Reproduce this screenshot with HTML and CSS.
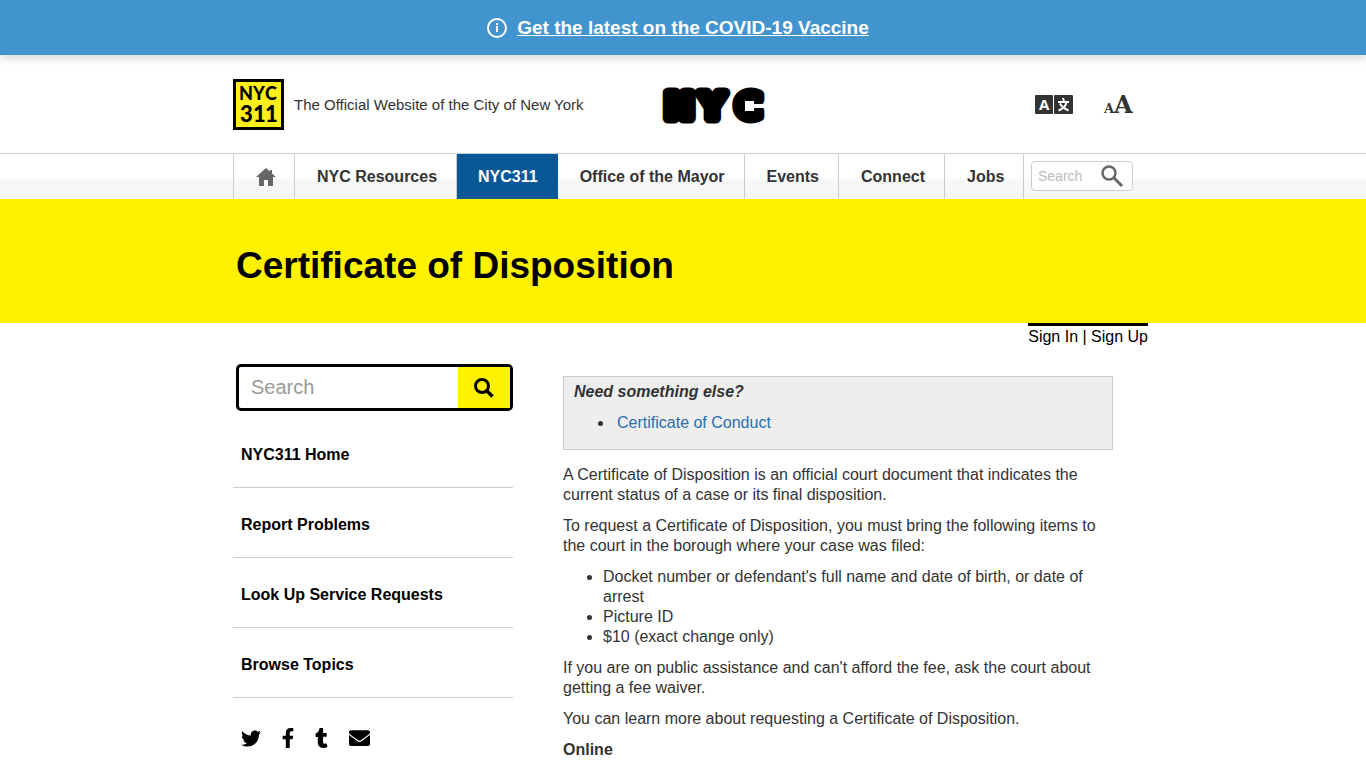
FILE: index.html
```html
<!DOCTYPE html>
<html lang="en">
<head>
<meta charset="utf-8">
<meta name="viewport" content="width=device-width, initial-scale=1">
<title>Certificate of Disposition · NYC311</title>
<link rel="stylesheet" href="styles.css">
</head>
<body>
<div class="alert">
  <svg class="alert-icon" viewBox="0 0 20 20" width="20" height="20" aria-hidden="true"><circle cx="10" cy="10" r="9" fill="none" stroke="#fff" stroke-width="2"/><path d="M9 5h2v2H9zM9 8h2v6H9z" fill="#fff"/></svg>
  <a href="#">Get the latest on the COVID-19 Vaccine</a>
</div>
<header class="header">
  <div class="container header-row">
    <div class="brand">
      <a href="#" class="logo-311" aria-label="NYC311">
        <svg viewBox="0 0 51 51" width="51" height="51"><rect x="1.5" y="1.5" width="48" height="48" fill="#ffee1a" stroke="#000" stroke-width="3"/><text class="logo-text" x="6 20 32" y="21" font-size="18">NYC</text><text class="logo-text" x="7 20 32" y="43" font-size="22">311</text></svg>
      </a>
      <span class="tagline">The Official Website of the City of New York</span>
    </div>
    <a href="#" class="logo-nyc" aria-label="NYC">
      <svg viewBox="0 0 108 38" width="108" height="38"><text class="block-text" x="4 39 75" y="32" font-size="34">NYC</text><path d="M84 15h9v3h15v4H93v3h-9z" fill="#fff"/></svg>
    </a>
    <div class="tools">
      <button type="button" aria-label="Translate">
        <svg viewBox="0 0 38 20" width="38" height="20"><rect width="18" height="19" rx="1" fill="#333"/><rect x="19" width="19" height="19" rx="1" fill="#333"/><text class="tool-a" x="4" y="15">A</text><path d="M28 3l1 3M23 7h11M25 8.500c1.500 3.500 4 5 8.500 7M31.500 7.500c-1 4-3.500 6.500-8 8" fill="none" stroke="#fff" stroke-width="2"/></svg>
      </button>
      <button type="button" aria-label="Text size">
        <svg viewBox="0 0 29 20" width="29" height="20"><text class="size-a" x="0" y="18" font-size="13">A</text><text class="size-a" x="10" y="18" font-size="24">A</text></svg>
      </button>
    </div>
  </div>
</header>
<nav class="nav">
  <div class="container nav-row">
    <a href="#" class="home" aria-label="Home"><svg viewBox="0 0 20 18" width="20" height="18"><path d="M10 0l4 3.600V2h2v3.400L20 9h-3v9h-5v-6H8v6H3V9H0z" fill="#666"/></svg></a>
    <a href="#">NYC Resources</a>
    <a href="#" class="active">NYC311</a>
    <a href="#">Office of the Mayor</a>
    <a href="#">Events</a>
    <a href="#">Connect</a>
    <a href="#">Jobs</a>
    <form class="nav-search">
      <input type="text" placeholder="Search" aria-label="Search NYC">
      <button type="button" aria-label="Search NYC"><svg viewBox="0 0 22 22" width="22" height="22" fill="none" stroke="#666"><circle cx="8" cy="8" r="6.500" stroke-width="2.500"/><path d="M13 13l8 8" stroke-width="3"/></svg></button>
    </form>
  </div>
</nav>
<div class="title-band"><div class="container"><h1>Certificate of Disposition</h1></div></div>
<div class="container">
  <div class="account"><div class="account-links"><a href="#">Sign In</a> | <a href="#">Sign Up</a></div></div>
  <div class="columns">
    <aside class="sidebar">
      <form class="side-search">
        <input type="text" placeholder="Search" aria-label="Search NYC311">
        <button type="button" aria-label="Search NYC311"><svg viewBox="0 0 20 20" width="20" height="20" fill="none" stroke="#000"><circle cx="8" cy="8" r="6.500" stroke-width="3"/><path d="M12.500 12.500l6 6" stroke-width="3.500"/></svg></button>
      </form>
      <ul class="side-menu">
        <li><a href="#">NYC311 Home</a></li>
        <li><a href="#">Report Problems</a></li>
        <li><a href="#">Look Up Service Requests</a></li>
        <li><a href="#">Browse Topics</a></li>
      </ul>
      <div class="social">
        <a href="#" aria-label="Twitter"><svg viewBox="0 48 512 416" width="20" height="17"><path d="M459.370 151.716c.325 4.548.325 9.097.325 13.645 0 138.720-105.583 298.558-298.558 298.558-59.452 0-114.680-17.219-161.137-47.106 8.447.974 16.568 1.299 25.340 1.299 49.055 0 94.213-16.568 130.274-44.832-46.132-.975-84.792-31.188-98.112-72.772 6.498.974 12.995 1.624 19.818 1.624 9.421 0 18.843-1.300 27.614-3.573-48.081-9.747-84.143-51.980-84.143-102.985v-1.299c13.969 7.797 30.214 12.670 47.431 13.319-28.264-18.843-46.781-51.005-46.781-87.391 0-19.492 5.197-37.360 14.294-52.954 51.655 63.675 129.300 105.258 216.365 109.807-1.624-7.797-2.599-15.918-2.599-24.040 0-57.828 46.782-104.934 104.934-104.934 30.213 0 57.502 12.670 76.670 33.137 23.715-4.548 46.456-13.320 66.599-25.340-7.798 24.366-24.366 44.833-46.132 57.827 21.117-2.273 41.584-8.122 60.426-16.243-14.292 20.791-32.161 39.308-52.628 54.253z"/></svg></a>
        <a href="#" aria-label="Facebook"><svg viewBox="22 0 276 512" width="12" height="20"><path d="M279.140 288l14.220-92.660h-88.910v-60.130c0-25.350 12.420-50.060 52.240-50.060h40.420V6.260S260.430 0 225.360 0c-73.220 0-121.080 44.380-121.080 124.720v70.620H22.890V288h81.390v224h100.170V288z"/></svg></a>
        <a href="#" aria-label="Tumblr"><svg viewBox="0 0 320 512" width="13" height="20"><path d="M309.800 480.300c-13.600 14.500-50 31.700-97.400 31.700-120.800 0-147-88.800-147-140.600v-144H17.900c-5.500 0-10-4.500-10-10v-68c0-7.200 4.500-13.600 11.300-16 62-21.800 81.500-76 84.300-117.100.8-11 6.500-16.300 16.100-16.300h70.900c5.500 0 10 4.500 10 10v115.200h83c5.500 0 10 4.400 10 9.900v81.700c0 5.500-4.500 10-10 10h-83.400V360c0 34.200 23.700 53.600 68 35.800 4.800-1.900 9-3.200 12.700-2.200 3.500.9 5.800 3.400 7.400 7.900l22 64.300c1.800 5 3.300 10.600-.4 14.500z"/></svg></a>
        <a href="#" aria-label="Email"><svg viewBox="0 64 512 384" width="21" height="16"><path d="M502.300 190.800c3.900-3.100 9.700-.2 9.700 4.700V400c0 26.500-21.500 48-48 48H48c-26.500 0-48-21.500-48-48V195.600c0-5 5.700-7.800 9.700-4.700 22.400 17.400 52.100 39.500 154.100 113.600 21.100 15.400 56.700 47.800 92.200 47.600 35.700.3 72-32.800 92.300-47.600 102-74.100 131.600-96.300 154-113.700zM256 320c23.200.4 56.600-29.200 73.400-41.400 132.700-96.300 142.800-104.700 173.400-128.700 5.800-4.500 9.200-11.500 9.200-18.900v-19c0-26.500-21.500-48-48-48H48c-26.500 0-48 21.500-48 48v19c0 7.400 3.400 14.300 9.200 18.900 30.600 23.900 40.700 32.400 173.400 128.700 16.800 12.200 50.200 41.800 73.400 41.400z"/></svg></a>
      </div>
    </aside>
    <main class="content">
      <section class="notice">
        <p><strong><em>Need something else?</em></strong></p>
        <ul><li><a href="#">Certificate of Conduct</a></li></ul>
      </section>
      <p>A Certificate of Disposition is an official court document that indicates the current status of a case or its final disposition.</p>
      <p>To request a Certificate of Disposition, you must bring the following items to the court in the borough where your case was filed:</p>
      <ul>
        <li>Docket number or defendant's full name and date of birth, or date of arrest</li>
        <li>Picture ID</li>
        <li>$10 (exact change only)</li>
      </ul>
      <p>If you are on public assistance and can't afford the fee, ask the court about getting a fee waiver.</p>
      <p>You can learn more about requesting a Certificate of Disposition.</p>
      <p><strong>Online</strong></p>
    </main>
  </div>
</div>
</body>
</html>
```
FILE: styles.css
```css
* { box-sizing: border-box; }
body {
  margin: 0;
  font: 16px/20px "Liberation Sans", Arial, sans-serif;
  color: #333;
  background: #fff;
}
a { color: inherit; text-decoration: none; }
button { padding: 0; border: 0; background: none; cursor: pointer; }
svg { display: block; overflow: visible; }
.container { max-width: 900px; margin: 0 auto; }

.alert {
  display: flex;
  align-items: center;
  justify-content: center;
  gap: 10px;
  padding: 17px 10px 16px 0;
  background: #4294cf;
  color: #fff;
  font-size: 19px;
  line-height: 22px;
  font-weight: bold;
  box-shadow: 0 2px 10px rgba(0, 0, 0, .2);
}
.alert a { text-decoration: underline; }

.header-row {
  display: grid;
  grid-template-columns: 27fr auto 23fr;
  align-items: center;
  padding: 24px 0 23px;
}
.brand { display: flex; align-items: center; gap: 10px; }
.tagline { font-size: 15px; white-space: nowrap; }
.logo-text { font-family: Lato, sans-serif; font-weight: 900; }
.block-text {
  font-family: "DejaVu Sans", sans-serif;
  font-weight: bold;
  stroke: #000;
  stroke-width: 11px;
  stroke-linejoin: round;
}
.tools { display: flex; justify-content: flex-end; gap: 31px; }
.tool-a { font: bold 15px "Open Sans", sans-serif; fill: #fff; }
.size-a { font-family: "DejaVu Serif", serif; font-weight: bold; fill: #333; }

.nav {
  border-top: 1px solid #ccc;
  background: linear-gradient(#fff 0, #fff 50%, #f7f7f7 60%, #f5f5f5 100%);
}
.nav-row { display: flex; font-weight: bold; }
.nav-row > a {
  padding: 13px 19px 12px 22px;
  border-right: 1px solid #ccc;
  white-space: nowrap;
}
.nav-row > .home { padding: 14px 18px 13px 22px; border-left: 1px solid #ccc; }
.nav-row > .active { padding-left: 21px; background: #0a5796; border-color: #0a5796; color: #fff; }
.nav-search {
  display: flex;
  align-items: center;
  width: 102px;
  height: 30px;
  margin: 7px 0 0 auto;
  padding: 0 9px 0 6px;
  border: 1px solid #ccc;
  border-radius: 4px;
  background: #fff;
}
.nav-search input, .side-search input {
  flex: 1;
  min-width: 0;
  padding: 0;
  border: 0;
  outline: 0;
  background: none;
  font: 14px "Liberation Sans", Arial, sans-serif;
}
.nav-search input::placeholder { color: #bbb; }

.title-band { background: #fff200; }
h1 {
  margin: 0;
  padding: 45px 3px 35px;
  color: #000;
  font-size: 37px;
  line-height: 44px;
}

.account { display: flex; justify-content: flex-end; margin-right: -15px; color: #000; }
.account-links { padding-top: 1px; border-top: 3px solid #000; }
.columns { display: grid; grid-template-columns: 280px minmax(0, 550px); gap: 50px; }
.sidebar { padding-top: 17px; }
.side-search {
  display: flex;
  height: 47px;
  margin-left: 3px;
  border: 3px solid #000;
  border-radius: 5px;
}
.side-search input { padding-left: 12px; font-size: 20px; }
.side-search input::placeholder { color: #999; }
.side-search button { display: grid; place-items: center; width: 52px; background: #fff200; }
.side-menu { margin: 7px 0 0; padding: 0; list-style: none; }
.side-menu li { border-bottom: 1px solid #ccc; }
.side-menu a { display: block; padding: 27px 8px 22px; color: #000; font-weight: bold; }
.social { display: flex; align-items: center; gap: 21px; padding: 30px 8px; }

.content { padding-top: 29px; }
.content p, .content ul { margin: 0 0 11px; }
.content ul { padding-left: 40px; }
.notice {
  margin-bottom: 15px;
  padding: 5px 10px;
  border: 1px solid #ccc;
  background: #eee;
}
.notice li { padding-left: 3px; }
.notice a { color: #2a6db0; }
```
